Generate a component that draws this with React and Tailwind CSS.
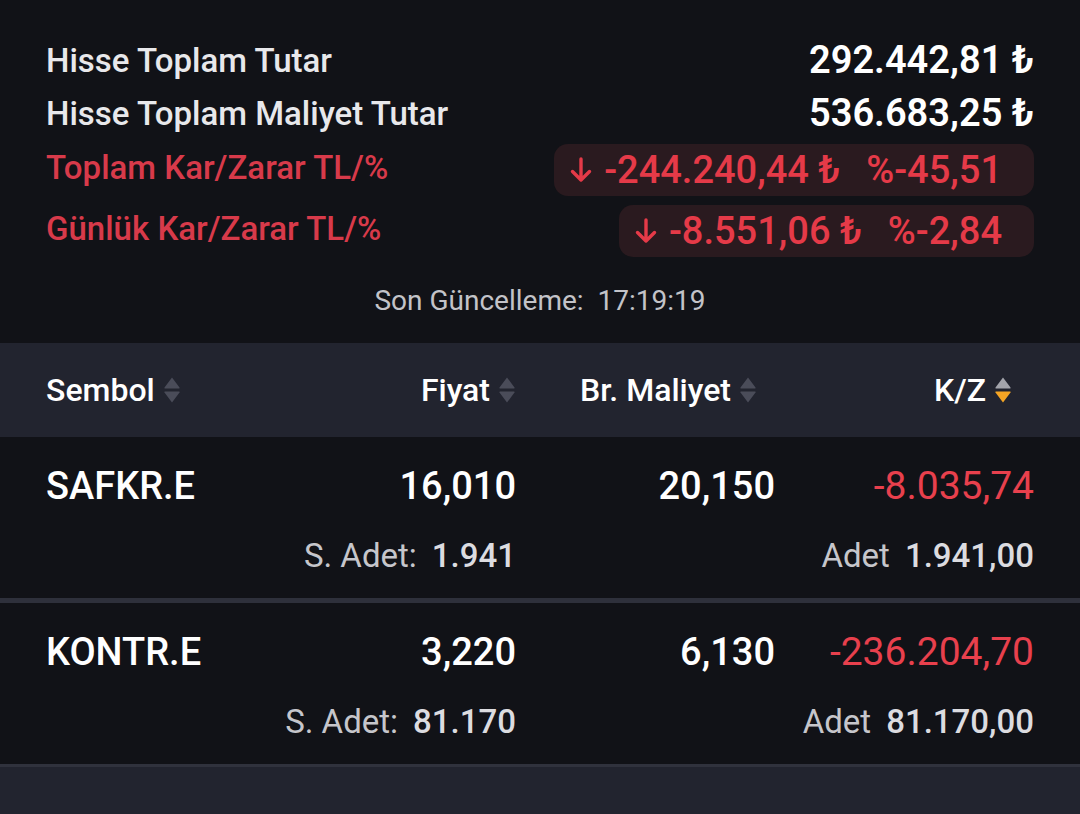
import React from 'react';

const rows = [
  { symbol: 'SAFKR.E', price: '16,010', cost: '20,150', pl: '-8.035,74', sAdet: '1.941', adet: '1.941,00' },
  { symbol: 'KONTR.E', price: '3,220', cost: '6,130', pl: '-236.204,70', sAdet: '81.170', adet: '81.170,00' },
];

function SortIcon({ active }) {
  const top = active ? '#a3a4ab' : '#4a4c59';
  const bottom = active ? '#f5a524' : '#4a4c59';
  return (
    <svg width="18" height="30" viewBox="0 0 18 30" className="ml-[8px] shrink-0">
      <path d="M9 2.5 L16.5 12.5 Q17 13.5 16 13.5 L2 13.5 Q1 13.5 1.5 12.5 Z" fill={top} />
      <path d="M9 27.5 L16.5 17.5 Q17 16.5 16 16.5 L2 16.5 Q1 16.5 1.5 17.5 Z" fill={bottom} />
    </svg>
  );
}

function DownArrow() {
  return (
    <svg width="22" height="26" viewBox="0 0 22 26" className="mr-[12px]">
      <path d="M11 2 V23 M2.5 14.5 L11 23 L19.5 14.5" stroke="#e53a48" strokeWidth="3.4" fill="none" strokeLinecap="round" strokeLinejoin="round" />
    </svg>
  );
}

function Pill({ value, pct }) {
  return (
    <div className="flex items-center h-[52px] rounded-[14px] bg-[#2a1a1f] pl-[16px] pr-[32px] text-[38px] text-[#e53a48] font-medium">
      <DownArrow />
      <span>{value}</span>
      <span className="ml-[26px]">{pct}</span>
    </div>
  );
}

export default function App() {
  return (
    <div className="w-[1080px] h-[814px] overflow-hidden bg-[#111217] text-white" style={{ fontFamily: 'Roboto, "Noto Sans", sans-serif' }}>
      {/* summary */}
      <div className="px-[46px] pt-[34px]">
        <div className="flex items-center justify-between h-[53px]">
          <span className="text-[33px] font-medium text-[#e8e8eb]">Hisse Toplam Tutar</span>
          <span className="text-[38px] font-semibold">292.442,81 ₺</span>
        </div>
        <div className="flex items-center justify-between h-[53px]">
          <span className="text-[33px] font-medium text-[#e8e8eb]">Hisse Toplam Maliyet Tutar</span>
          <span className="text-[38px] font-semibold">536.683,25 ₺</span>
        </div>
        <div className="flex items-center justify-between mt-[4px]">
          <span className="text-[33px] font-medium text-[#d83a4a] -mt-[4px]">Toplam Kar/Zarar TL/%</span>
          <Pill value="-244.240,44 ₺" pct="%-45,51" />
        </div>
        <div className="flex items-center justify-between mt-[9px]">
          <span className="text-[33px] font-medium text-[#d83a4a] -mt-[4px]">Günlük Kar/Zarar TL/%</span>
          <Pill value="-8.551,06 ₺" pct="%-2,84" />
        </div>
      </div>

      <div className="h-[86px] flex items-center justify-center text-[28px] text-[#c3c3c8] pt-[2px]">
        <span>Son Güncelleme:</span>
        <span className="ml-[14px]">17:19:19</span>
      </div>

      {/* table header */}
      <div className="h-[94px] bg-[#22242f] px-[46px] grid grid-cols-[200px_270px_259px_259px] items-center text-[32px] font-medium">
        <div className="flex items-center">Sembol<SortIcon /></div>
        <div className="flex items-center justify-end">Fiyat<SortIcon /></div>
        <div className="flex items-center justify-end pr-[18px]">Br. Maliyet<SortIcon /></div>
        <div className="flex items-center justify-end pr-[22px]">K/Z<SortIcon active /></div>
      </div>

      {rows.map((r, i) => (
        <div key={r.symbol}>
          <div className="h-[161px] px-[46px] pt-[27px] grid grid-cols-[200px_270px_259px_259px] content-start">
            <div className="h-[44px] flex items-center text-[38px] font-medium">{r.symbol}</div>
            <div className="h-[44px] flex items-center justify-end text-[38px] font-medium">{r.price}</div>
            <div className="h-[44px] flex items-center justify-end text-[38px] font-medium">{r.cost}</div>
            <div className="h-[44px] flex items-center justify-end text-[39px] text-[#e8404d]">{r.pl}</div>
            <div />
            <div className="mt-[28px] h-[40px] flex items-center justify-end text-[33px]">
              <span className="text-[#c6c6cb]">S. Adet:</span>
              <span className="ml-[15px] text-[#dcdce0] font-medium">{r.sAdet}</span>
            </div>
            <div />
            <div className="mt-[28px] h-[40px] flex items-center justify-end text-[33px]">
              <span className="text-[#c6c6cb]">Adet</span>
              <span className="ml-[15px] text-[#dcdce0] font-medium">{r.adet}</span>
            </div>
          </div>
          <div className={i === 0 ? 'h-[5px] bg-[#2e303b]' : 'h-[3px] bg-[#30323d]'} />
        </div>
      ))}

      <div className="h-[60px] bg-[#22242f]" />
    </div>
  );
}
